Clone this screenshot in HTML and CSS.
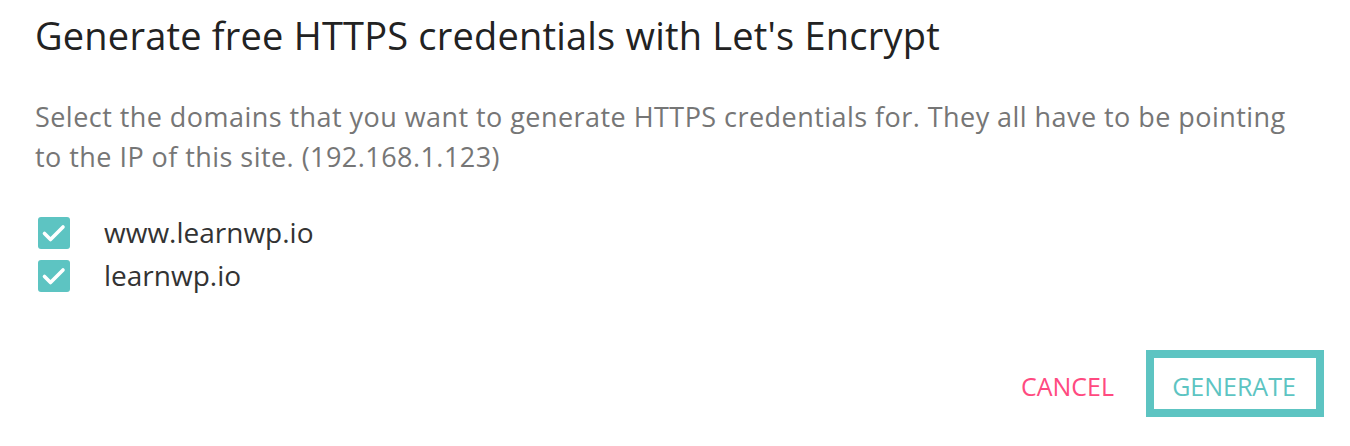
FILE: index.html
```html
<!DOCTYPE html>
<html>
<head>
<meta charset="utf-8">
<link rel="stylesheet" href="styles.css">
</head>
<body>
<div class="dialog">
  <h1 class="title">Generate free HTTPS credentials with Let's Encrypt</h1>
  <p class="desc">Select the domains that you want to generate HTTPS credentials for. They all have to be pointing to the IP of this site. (192.168.1.123)</p>
  <ul class="domains">
    <li class="domain">
      <span class="check"><svg viewBox="0 0 32 32" width="32" height="32"><path d="M6.5 16.5L12.5 22.5L25 10" fill="none" stroke="#fff" stroke-width="3.6" stroke-linecap="round" stroke-linejoin="round"/></svg></span>
      <span class="label">www.learnwp.io</span>
    </li>
    <li class="domain">
      <span class="check"><svg viewBox="0 0 32 32" width="32" height="32"><path d="M6.5 16.5L12.5 22.5L25 10" fill="none" stroke="#fff" stroke-width="3.6" stroke-linecap="round" stroke-linejoin="round"/></svg></span>
      <span class="label">learnwp.io</span>
    </li>
  </ul>
  <div class="actions">
    <button class="btn btn-cancel">CANCEL</button>
    <button class="btn btn-generate">GENERATE</button>
  </div>
</div>
</body>
</html>
```

FILE: styles.css
```css
html, body {
  margin: 0;
  padding: 0;
  background: #fff;
}
body {
  font-family: "Open Sans", "Liberation Sans", sans-serif;
}
.dialog {
  padding: 9px 26px 0 35px;
}
.title {
  margin: 0;
  font-size: 38px;
  font-weight: 400;
  color: #222;
  line-height: 52px;
  letter-spacing: 0.2px;
}
.desc {
  margin: 36px 20px 0 0;
  font-size: 27px;
  line-height: 40px;
  letter-spacing: 0.45px;
  color: #767676;
}
.domains {
  list-style: none;
  margin: 34px 0 0;
  padding: 0;
}
.domain {
  display: flex;
  align-items: center;
  height: 43px;
}
.check {
  width: 32px;
  height: 32px;
  margin-left: 3px;
  border-radius: 3px;
  background: #5dc4c2;
  display: flex;
}
.label {
  margin-left: 34px;
  margin-top: -2px;
  font-size: 28px;
  color: #333;
}
.actions {
  display: flex;
  justify-content: flex-end;
  align-items: center;
  margin-top: 53px;
  gap: 29px;
}
.btn {
  font-family: "Open Sans", "Liberation Sans", sans-serif;
  font-size: 25px;
  background: #fff;
  cursor: pointer;
}
.btn-cancel {
  border: none;
  color: #ff4a80;
  padding: 4px 3px 0;
}
.btn-generate {
  border: 8px solid #5dc4c2;
  color: #5dc4c2;
  width: 178px;
  height: 67px;
  padding: 4px 2px 0 0;
}
```
